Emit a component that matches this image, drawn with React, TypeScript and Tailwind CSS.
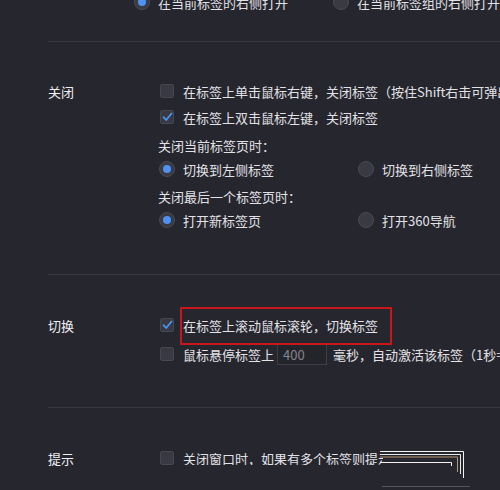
import React from 'react';

const font = { fontFamily: '"Noto Sans CJK SC", "Noto Sans", sans-serif' };

function Checkbox({ checked }: { checked?: boolean }) {
  return (
    <span className="ml-[2px] mr-[9px] flex h-[14px] w-[14px] shrink-0 items-center justify-center rounded-[2px] border border-[#474751] bg-[#393943]">
      {checked && (
        <svg width="11" height="10" viewBox="0 0 11 10" fill="none">
          <path d="M1.5 5.2 L4.2 8 L9.5 1.5" stroke="#4a93ee" strokeWidth="1.8" strokeLinecap="round" strokeLinejoin="round" />
        </svg>
      )}
    </span>
  );
}

function Radio({ checked }: { checked?: boolean }) {
  return (
    <span className="ml-[1px] mr-[8px] flex h-[16px] w-[16px] shrink-0 items-center justify-center rounded-full border border-[#4a4a55] bg-[#3a3a44]">
      {checked && <span className="h-[8px] w-[8px] rounded-full bg-[#4f92f2]" />}
    </span>
  );
}

function RadioPair({ left, right, leftOn }: { left: string; right: string; leftOn?: boolean }) {
  return (
    <div className="flex h-6 items-center whitespace-nowrap">
      <div className="flex w-[199px] items-center">
        <Radio checked={leftOn} />
        <span>{left}</span>
      </div>
      <div className="flex items-center">
        <Radio checked={!leftOn} />
        <span>{right}</span>
      </div>
    </div>
  );
}

export default function App() {
  return (
    <div className="h-[490px] w-[500px] overflow-hidden bg-[#26262e] pl-[48px] text-[13px] leading-none text-[#e2e2e6]" style={font}>
      {/* 打开位置 (cut off at the top) */}
      <section className="flex border-b border-[#383842] pb-[27px]">
        <div className="w-[110px]" />
        <div className="-mt-[10px] flex-1">
          <RadioPair left="在当前标签的右侧打开" right="在当前标签组的右侧打开" leftOn />
        </div>
      </section>

      {/* 关闭 */}
      <section className="flex border-b border-[#383842] pb-[42px] pt-[37px]">
        <div className="flex h-6 w-[110px] items-center text-[#f0f0f2]">关闭</div>
        <div className="min-w-0 flex-1 overflow-hidden whitespace-nowrap">
          <div className="flex h-6 items-center">
            <Checkbox />
            <span>在标签上单击鼠标右键，关闭标签（按住Shift右击可弹出菜单）</span>
          </div>
          <div className="mt-[2px] flex h-6 items-center">
            <Checkbox checked />
            <span>在标签上双击鼠标左键，关闭标签</span>
          </div>
          <div className="mt-1 flex h-6 items-center">关闭当前标签页时：</div>
          <RadioPair left="切换到左侧标签" right="切换到右侧标签" leftOn />
          <div className="mt-[3px] flex h-6 items-center">关闭最后一个标签页时：</div>
          <RadioPair left="打开新标签页" right="打开360导航" leftOn />
        </div>
      </section>

      {/* 切换 */}
      <section className="flex border-b border-[#383842] pb-[41px] pt-[38px]">
        <div className="flex h-6 w-[110px] items-center text-[#f0f0f2]">切换</div>
        <div className="min-w-0 flex-1 whitespace-nowrap">
          <div className="flex h-6 items-center">
            <Checkbox checked />
            <span className="relative">
              在标签上滚动鼠标滚轮，切换标签
              <span className="absolute -left-[3px] -top-[12px] h-[38px] w-[212px] border-2 border-[#c8161d]" />
            </span>
          </div>
          <div className="mt-[5px] flex h-6 items-center overflow-hidden">
            <Checkbox />
            <span>鼠标悬停标签上</span>
            <span className="ml-[3px] mr-[6px] flex h-[22px] w-[50px] shrink-0 items-center border border-[#3e3e48] bg-[#24242b] pl-[5px] text-[#85858d]">
              400
            </span>
            <span>毫秒，自动激活该标签（1秒=1000毫秒）</span>
          </div>
        </div>
      </section>

      {/* 提示 */}
      <section className="flex pt-[38px]">
        <div className="flex h-6 w-[110px] items-center text-[#f0f0f2]">提示</div>
        <div className="relative flex-1">
          <div className="flex h-6 items-center whitespace-nowrap">
            <Checkbox />
            <span className="w-[200px] overflow-hidden">关闭窗口时，如果有多个标签则提示</span>
          </div>
          <svg className="absolute left-[222px] top-[2px]" width="100" height="44" viewBox="0 0 100 44" fill="none">
            <polyline points="0,3.5 83.5,3.5 83.5,30" stroke="#f2f2f2" strokeWidth="1" />
            <polyline points="0,6.5 80.5,6.5 80.5,26" stroke="#e8e8e8" strokeWidth="1" />
            <polyline points="0,9 77.5,9 77.5,24" stroke="#b49a74" strokeWidth="1" />
            <polyline points="0,14.5 71.5,14.5 71.5,18" stroke="#f2f2f2" strokeWidth="1" />
            <line x1="2" y1="38.5" x2="90" y2="38.5" stroke="#55555e" strokeWidth="1" />
          </svg>
        </div>
      </section>
    </div>
  );
}
